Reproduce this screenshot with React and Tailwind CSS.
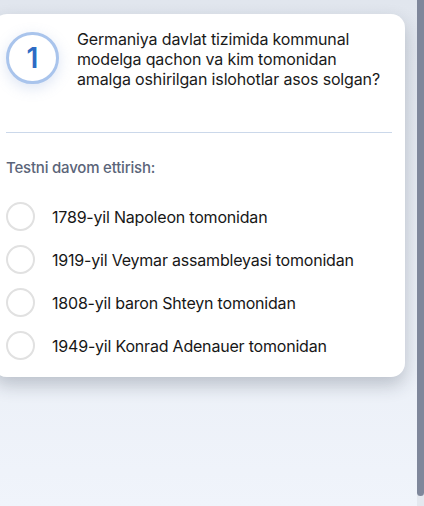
import React from "react";

const options = [
  "1789-yil Napoleon tomonidan",
  "1919-yil Veymar assambleyasi tomonidan",
  "1808-yil baron Shteyn tomonidan",
  "1949-yil Konrad Adenauer tomonidan",
];

export default function App() {
  return (
    <div
      className="flex h-[506px] w-full overflow-hidden bg-gradient-to-b from-[#e1e6ee] to-[#f0f4fb]"
      style={{ fontFamily: "Inter, 'Noto Sans', sans-serif" }}
    >
      <div className="min-w-0 flex-1 pt-[14px]">
        <div className="-ml-[7px] w-[412px] rounded-[14px] bg-white px-[13px] pt-[12px] pb-[17px] shadow-[0_8px_18px_rgba(30,41,59,0.24)]">
          <div className="flex items-center gap-[18px]">
            <div className="flex h-[52px] w-[53px] shrink-0 items-center justify-center rounded-full border-[3px] border-[#a9c4ec] bg-white shadow-[0_4px_14px_rgba(120,150,210,0.25)]">
              <span className="text-[28px] font-semibold leading-none text-[#2d6bc4]">1</span>
            </div>
            <p className="w-[310px] pt-[3px] text-[16px] leading-[20px] tracking-[-0.15px] text-[#1a1a1a]">
              Germaniya davlat tizimida kommunal modelga qachon va kim tomonidan amalga oshirilgan islohotlar asos solgan?
            </p>
          </div>
          <div className="mt-[43px] h-px bg-[#cbd8ea]" />
          <div className="mt-[24px] text-[15px] font-medium leading-[22px] tracking-[-0.2px] text-[#5b6579]">
            Testni davom ettirish:
          </div>
          <div className="mt-[23px] flex flex-col gap-[14px]">
            {options.map((o) => (
              <div key={o} className="flex items-center gap-[17px]">
                <div className="h-[29px] w-[29px] shrink-0 rounded-full border-[2.5px] border-[#e1e1e1] bg-white" />
                <span className="text-[16px] leading-[20px] tracking-[-0.2px] text-[#171717]">{o}</span>
              </div>
            ))}
          </div>
        </div>
      </div>
      <div className="relative z-10 flex h-full w-[7px] min-w-[7px] shrink-0 flex-col bg-[#e4e8ef]">
        <div className="h-[496px] w-[7px] rounded-b-[4px] bg-[#7f879b]" />
      </div>
    </div>
  );
}
